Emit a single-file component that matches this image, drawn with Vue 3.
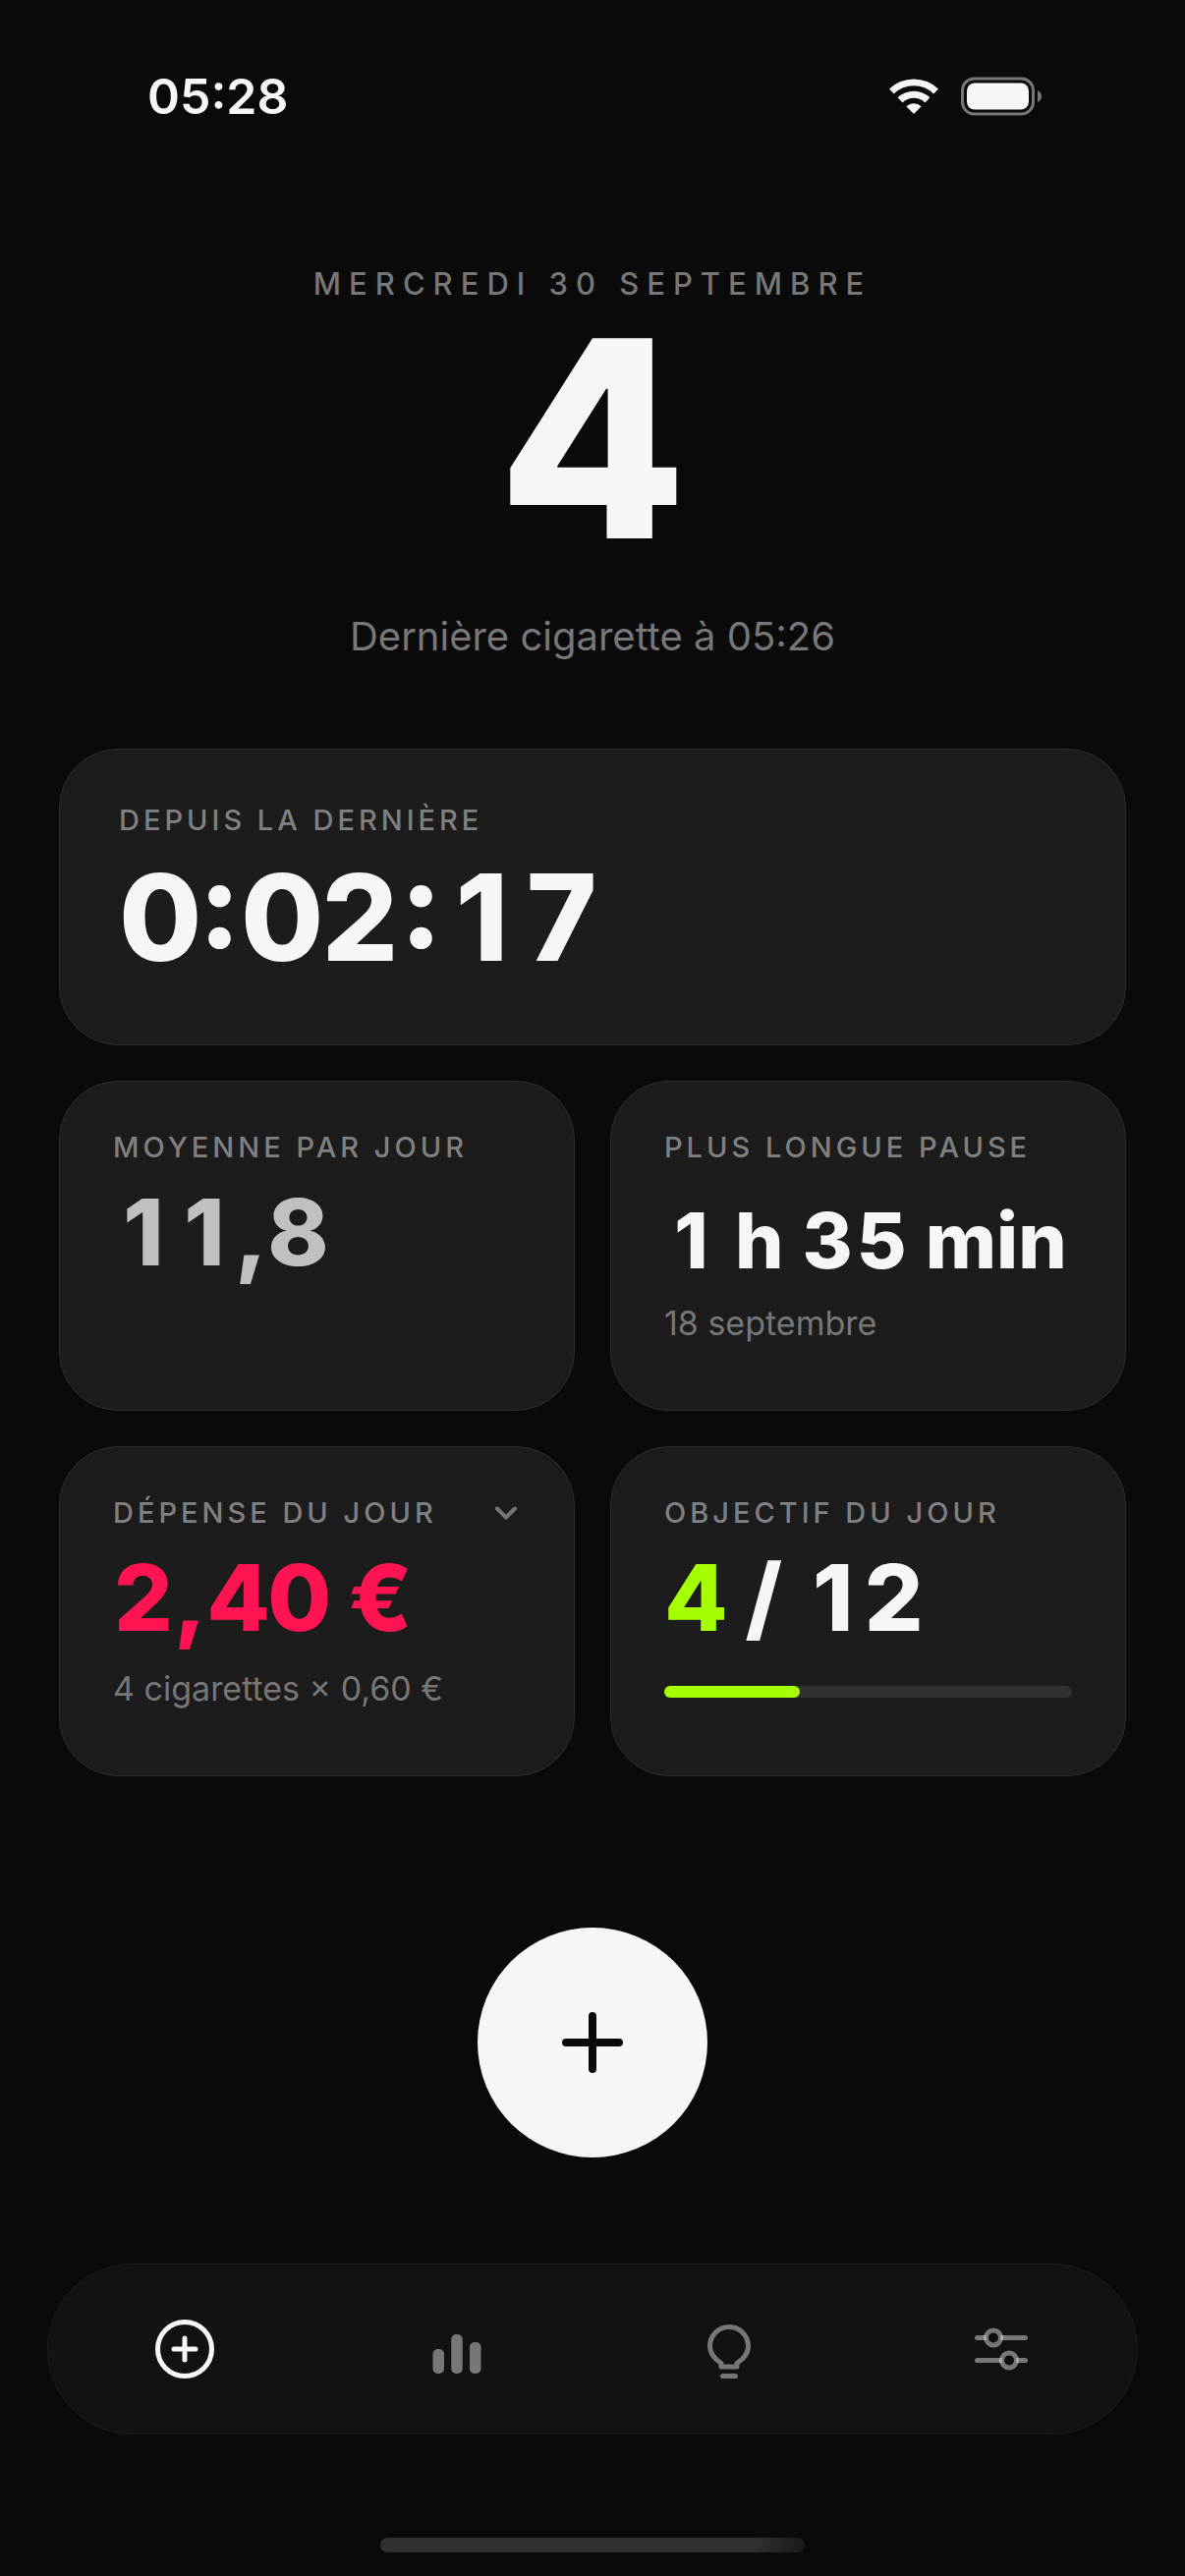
<script setup>
import { ref } from 'vue'

const count = 4
const goal = 12
const progress = `${(count / goal) * 100}%`
const expanded = ref(false)

const parts = (text) =>
  text.match(/\d|\D+/g).map((value) => ({ value, digit: /\d/.test(value) }))

const timer = parts('0:02:17')
const average = parts('11,8')
const pause = parts('1 h 35 min')
const spent = parts('2,40 €')
const target = parts(` / ${goal}`)
</script>

<template>
  <div class="screen">
    <div class="status">
      <time class="clock">05:28</time>
      <div class="indicators">
        <svg class="wifi" width="52" height="40" viewBox="0 0 52 40" aria-label="Wi-Fi" role="img">
          <path d="M1 12.500 A36 36 0 0 1 51 12.500 L46.200 17.400 A29 29 0 0 0 5.800 17.400 Z" />
          <path d="M9.600 21.300 A24 24 0 0 1 42.400 21.300 L37.400 26.400 A16.500 16.500 0 0 0 14.600 26.400 Z" />
          <path d="M18.400 30.200 A11.500 11.500 0 0 1 33.600 30.200 L26 38 Z" />
        </svg>
        <svg width="84" height="40" viewBox="0 0 84 40" aria-label="Batterie" role="img">
          <rect class="shell" x="1.500" y="2" width="72" height="36" rx="12" />
          <rect class="charge" x="6" y="6.500" width="63" height="27" rx="8" />
          <path class="nub" d="M78 14 Q82 16 82 20 Q82 24 78 26 Z" />
        </svg>
      </div>
    </div>

    <main class="content">
      <header class="hero">
        <p class="date">MERCREDI 30 SEPTEMBRE</p>
        <h1 class="count">{{ count }}</h1>
        <p class="last">Dernière cigarette à 05:26</p>
      </header>

      <section class="card wide">
        <h2 class="label">DEPUIS LA DERNIÈRE</h2>
        <p class="timer"><span v-for="(part, i) in timer" :key="i" :class="{ digit: part.digit }">{{ part.value }}</span></p>
      </section>

      <div class="grid">
        <section class="card">
          <h2 class="label">MOYENNE PAR JOUR</h2>
          <p class="value muted"><span v-for="(part, i) in average" :key="i" :class="{ digit: part.digit }">{{ part.value }}</span></p>
        </section>

        <section class="card">
          <h2 class="label">PLUS LONGUE PAUSE</h2>
          <p class="value duration"><span v-for="(part, i) in pause" :key="i" :class="{ digit: part.digit }">{{ part.value }}</span></p>
          <p class="note">18 septembre</p>
        </section>

        <section class="card">
          <h2 class="label">
            <button class="toggle" type="button" :aria-expanded="expanded" @click="expanded = !expanded">
              DÉPENSE DU JOUR
              <svg width="30" height="30" viewBox="0 0 30 30" aria-hidden="true">
                <path d="M6 10.500 L15 19.500 L24 10.500" />
              </svg>
            </button>
          </h2>
          <p class="value spent"><span v-for="(part, i) in spent" :key="i" :class="{ digit: part.digit }">{{ part.value }}</span></p>
          <p class="note">4 cigarettes × 0,60 €</p>
        </section>

        <section class="card">
          <h2 class="label">OBJECTIF DU JOUR</h2>
          <p class="value"><span class="digit good">{{ count }}</span><span v-for="(part, i) in target" :key="i" :class="{ digit: part.digit }">{{ part.value }}</span></p>
          <div class="track" role="progressbar" aria-label="Objectif du jour" :aria-valuenow="count" aria-valuemin="0" :aria-valuemax="goal">
            <div class="fill" :style="{ width: progress }"></div>
          </div>
        </section>
      </div>

      <button class="add" type="button" aria-label="Ajouter une cigarette">
        <svg width="64" height="64" viewBox="0 0 64 64" aria-hidden="true">
          <path d="M32 5 V59 M5 32 H59" />
        </svg>
      </button>
    </main>

    <nav class="tabs" aria-label="Navigation">
      <a class="tab active" href="#jour" aria-label="Jour" aria-current="page">
        <svg width="72" height="72" viewBox="0 0 72 72">
          <circle cx="36" cy="36" r="27.500" />
          <path d="M36 25 V47 M25 36 H47" />
        </svg>
      </a>
      <a class="tab" href="#stats" aria-label="Statistiques">
        <svg class="solid" width="72" height="72" viewBox="0 0 72 72">
          <rect x="11.500" y="36" width="11.500" height="25" rx="5" />
          <rect x="30.250" y="21" width="11.500" height="40" rx="5" />
          <rect x="49" y="29" width="11.500" height="32" rx="5" />
        </svg>
      </a>
      <a class="tab" href="#conseils" aria-label="Conseils">
        <svg width="72" height="72" viewBox="0 0 72 72">
          <path d="M28 54 V50.500 C21 46 16.500 40.500 16.500 33 A19.500 19.500 0 0 1 55.500 33 C55.500 40.500 51 46 44 50.500 V54 Z" />
          <path d="M29.500 63.500 H42.500" />
        </svg>
      </a>
      <a class="tab" href="#reglages" aria-label="Réglages">
        <svg class="sliders" width="72" height="72" viewBox="0 0 72 72">
          <path d="M11.500 24.500 H60.500 M11.500 47.500 H60.500" />
          <circle cx="28" cy="24.500" r="7.500" />
          <circle cx="44" cy="47.500" r="7.500" />
        </svg>
      </a>
    </nav>
    <div class="home"></div>
  </div>
</template>

<style>
body {
  margin: 0;
  background: #0a0a0a;
}
</style>

<style scoped>
.screen {
  display: flex;
  flex-direction: column;
  box-sizing: border-box;
  min-height: 100vh;
  padding: 68px 0 24px;
  background: #0a0a0a;
  color: #f6f6f6;
  font-family: Inter, "Liberation Sans", sans-serif;
}

h1,
h2,
p {
  margin: 0;
}

.status {
  display: flex;
  justify-content: space-between;
  align-items: center;
  height: 60px;
  padding: 0 144px 0 150px;
}

.clock {
  font-size: 50px;
  font-weight: 600;
  line-height: 60px;
}

.indicators {
  display: flex;
  gap: 22px;
}

.indicators svg {
  fill: #f6f6f6;
}

.indicators .shell {
  fill: none;
  stroke: #777;
  stroke-width: 3;
}

.indicators .nub {
  fill: #777;
}

.content {
  display: flex;
  flex-direction: column;
  padding: 0 60px;
}

.hero {
  display: flex;
  flex-direction: column;
  align-items: center;
  padding: 141px 0 89px;
  text-align: center;
}

.date {
  color: #777;
  font-size: 31px;
  font-weight: 500;
  line-height: 40px;
  letter-spacing: 8px;
}

.count {
  margin: 18px 0 56px;
  font-size: 280px;
  font-weight: 800;
  line-height: 240px;
}

.last {
  color: #777;
  font-size: 40px;
  line-height: 50px;
}

.card {
  min-width: 0;
  padding: 49px 54px 68px;
  border: 1px solid #2d2d2d;
  border-radius: 60px;
  background: #1c1c1c;
}

.wide {
  padding: 54px 60px 64px;
}

.label {
  color: #808080;
  font-size: 29px;
  font-weight: 500;
  line-height: 36px;
  letter-spacing: 4px;
  white-space: nowrap;
}

.timer {
  --cell: 81px;
  margin-top: 16px;
  font-size: 122px;
  font-weight: 800;
  font-feature-settings: "case";
  line-height: 130px;
}

.grid {
  display: grid;
  grid-template-columns: 1fr 1fr;
  gap: 36px;
  margin-top: 36px;
}

.value {
  --cell: 62px;
  height: 100px;
  margin-top: 18px;
  font-size: 94px;
  font-weight: 800;
  line-height: 100px;
  white-space: pre;
}

.duration {
  --cell: 55px;
  font-size: 78px;
  line-height: 118px;
}

.digit {
  display: inline-block;
  width: var(--cell);
  text-align: center;
}

.muted {
  color: #c0c0c0;
}

.spent {
  color: #ff1351;
}

.good {
  color: #a6ff00;
}

.note {
  margin-top: 23px;
  color: #777;
  font-size: 34px;
  line-height: 40px;
  white-space: nowrap;
}

.toggle {
  display: flex;
  justify-content: space-between;
  align-items: center;
  width: 100%;
  padding: 0;
  border: 0;
  background: none;
  color: inherit;
  font: inherit;
  letter-spacing: inherit;
}

.toggle svg {
  fill: none;
  stroke: #777;
  stroke-width: 4;
  stroke-linecap: round;
  stroke-linejoin: round;
}

.track {
  height: 12px;
  margin-top: 40px;
  border-radius: 6px;
  background: #303030;
}

.fill {
  height: 100%;
  border-radius: 6px;
  background: #a6ff00;
}

.add {
  display: flex;
  justify-content: center;
  align-items: center;
  align-self: center;
  width: 234px;
  height: 234px;
  margin: 154px 0 60px;
  padding: 0;
  border: 0;
  border-radius: 50%;
  background: #f6f6f6;
}

.add svg {
  fill: none;
  stroke: #0a0a0a;
  stroke-width: 8;
  stroke-linecap: round;
}

.tabs {
  display: grid;
  grid-template-columns: repeat(4, 1fr);
  height: 172px;
  margin: auto 48px 105px;
  border: 1px solid #1d1d1d;
  border-radius: 87px;
  background: #121212;
}

.tab {
  display: flex;
  justify-content: center;
  align-items: center;
  color: #777;
}

.active {
  color: #f6f6f6;
}

.tab svg {
  fill: none;
  stroke: currentColor;
  stroke-width: 5;
  stroke-linecap: round;
  stroke-linejoin: round;
}

.tab .solid {
  fill: currentColor;
  stroke: none;
}

.tab .sliders {
  stroke: rgb(255 255 255 / 43%);
}

.sliders circle {
  fill: #0d0d0d;
}

.home {
  align-self: center;
  width: 432px;
  height: 15px;
  border-radius: 8px;
  background: linear-gradient(100deg, #303030 88%, #1c1c1c 98%);
}
</style>
